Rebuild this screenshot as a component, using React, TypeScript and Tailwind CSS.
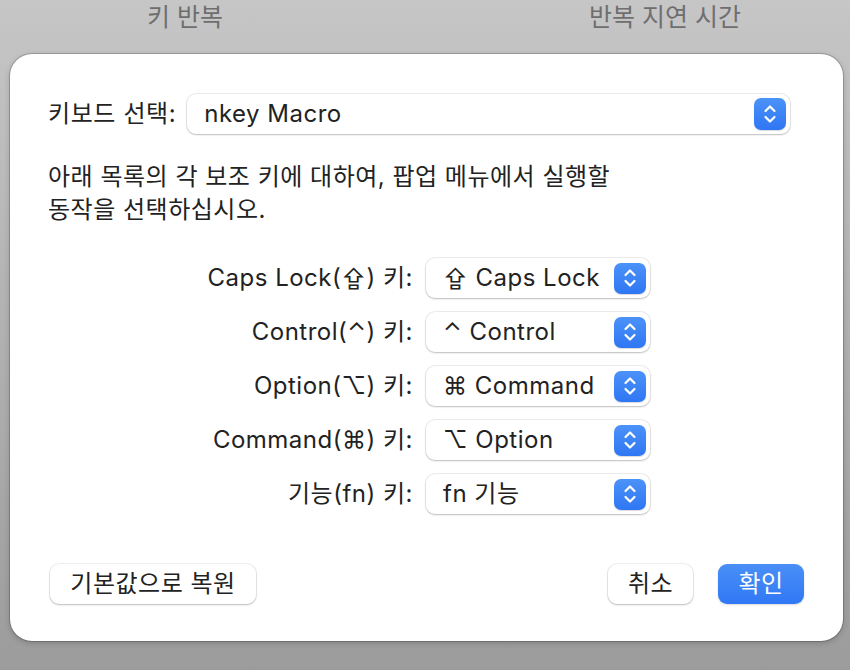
import React from 'react';

const FONT = "font-['Inter','Noto_Sans_CJK_KR',sans-serif]";

function Stepper({ size = 'md' }: { size?: 'md' | 'lg' }) {
  return (
    <div
      className={`flex items-center justify-center rounded-[7px] bg-gradient-to-b from-[#4b92f8] to-[#2f76f4] shadow-[0_1px_1px_rgba(0,0,0,0.15)] ${
        size === 'lg' ? 'h-[32px] w-[32px]' : 'h-[31px] w-[32px]'
      }`}
    >
      <svg width="14" height="22" viewBox="0 0 14 22" fill="none">
        <path d="M2.5 8 L7 3.5 L11.5 8" stroke="white" strokeWidth="2.2" strokeLinecap="round" strokeLinejoin="round" />
        <path d="M2.5 14 L7 18.5 L11.5 14" stroke="white" strokeWidth="2.2" strokeLinecap="round" strokeLinejoin="round" />
      </svg>
    </div>
  );
}

function PopUp({ value, wide }: { value: string; wide?: boolean }) {
  return (
    <div className="flex h-[40px] items-center justify-between rounded-[9px] bg-white pl-[17px] pr-[4px] shadow-[0_0_0_1px_rgba(0,0,0,0.07),0_1px_2px_rgba(0,0,0,0.2)]">
      <span className="text-[24px] leading-none tracking-[0.5px] text-[#222]">{value}</span>
      <Stepper size={wide ? 'lg' : 'md'} />
    </div>
  );
}

const rows = [
  { label: 'Caps Lock(⇪) 키:', value: '⇪ Caps Lock' },
  { label: 'Control(⌃) 키:', value: '⌃ Control' },
  { label: 'Option(⌥) 키:', value: '⌘ Command' },
  { label: 'Command(⌘) 키:', value: '⌥ Option' },
  { label: '기능(fn) 키:', value: 'fn 기능' },
];

export default function App() {
  return (
    <div className={`flex h-[670px] w-[850px] flex-col bg-gradient-to-b from-[#c7c6c7] to-[#9d9c9d] ${FONT}`}>
      {/* background header of the settings pane */}
      <div className="flex h-[54px] items-start text-[25px] leading-[34px] text-[#6f6e6f]">
        <div className="w-[370px] text-center">키 반복</div>
        <div className="ml-[110px] w-[370px] text-center">반복 지연 시간</div>
      </div>

      {/* sheet */}
      <div className="ml-[10px] mr-[7px] flex h-[587px] flex-col rounded-[22px] bg-white pl-[38px] pr-[53px] pt-[40px] shadow-[0_0_0_1px_rgba(0,0,0,0.18),0_2px_6px_rgba(0,0,0,0.2)]">
        <div className="flex items-center gap-[11px]">
          <span className="text-[24px] tracking-[0.6px] text-[#222]">키보드 선택:</span>
          <div className="flex-1">
            <PopUp value="nkey Macro" wide />
          </div>
        </div>

        <p className="mt-[26px] text-[24px] leading-[33px] tracking-[0.5px] text-[#222]">
          아래 목록의 각 보조 키에 대하여, 팝업 메뉴에서 실행할
          <br />
          동작을 선택하십시오.
        </p>

        <div className="mt-[32px] grid grid-cols-[365px_224px] gap-x-[13px] gap-y-[14px]">
          {rows.map((r) => (
            <React.Fragment key={r.label}>
              <div className="flex items-center justify-end text-[24px] tracking-[0.5px] text-[#222]">{r.label}</div>
              <PopUp value={r.value} />
            </React.Fragment>
          ))}
        </div>

        <div className="mt-[50px] flex items-center pl-[2px]">
          <button className="flex h-[40px] w-[206px] items-center justify-center rounded-[9px] bg-white text-[24px] tracking-[0.5px] text-[#222] shadow-[0_0_0_1px_rgba(0,0,0,0.06),0_1px_2px_rgba(0,0,0,0.22)]">
            기본값으로 복원
          </button>
          <div className="flex-1" />
          <button className="flex h-[40px] w-[85px] items-center justify-center rounded-[9px] bg-white text-[24px] tracking-[0.5px] text-[#222] shadow-[0_0_0_1px_rgba(0,0,0,0.06),0_1px_2px_rgba(0,0,0,0.22)]">
            취소
          </button>
          <button className="-mr-[14px] ml-[25px] flex h-[40px] w-[86px] items-center justify-center rounded-[9px] bg-gradient-to-b from-[#4a8ff7] to-[#3078f5] text-[24px] tracking-[0.5px] text-white shadow-[0_1px_2px_rgba(0,0,0,0.15)]">
            확인
          </button>
        </div>
      </div>
    </div>
  );
}
